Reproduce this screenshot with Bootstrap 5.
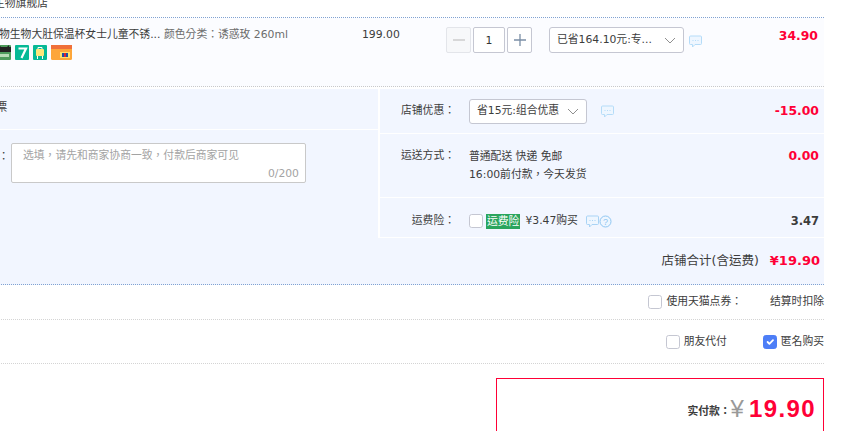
<!DOCTYPE html>
<html>
<head>
  <meta charset="UTF-8" />
  <title>确认订单</title>
  <link href="https://cdn.jsdelivr.net/npm/bootstrap@5.3.0/dist/css/bootstrap.min.css" rel="stylesheet" />
  <style>
    html, body { height: 431px; overflow: hidden; }
    body { background: #fff; color: #3c3c3c; font: 10.8px/16px "DejaVu Sans", "Noto Sans CJK TC", sans-serif; }
    .order-shell { width: 884px; margin: -7px 0 0 -60px; }
    .shop-line { height: 25px; padding-top: 3px; padding-left: 54px; border-bottom: 1px dotted #80a2d2; }
    .item-row { height: 69px; background: #fbfcff; border-bottom: 1px dotted #c9c9c9; padding-top: 9px; }
    .item-title { width: 224px; padding-left: 60px; white-space: nowrap; overflow: hidden; }
    .item-title-text { margin-left: -1px; }
    .item-tags { margin-top: 2px; margin-left: -3px; }
    .item-sku { width: 198px; color: #6c6c6c; white-space: nowrap; }
    .item-price { width: 84px; }
    .item-qty { width: 103px; }
    .stepper-btn { width: 25px; height: 26px; padding: 0; border: 1px solid #c5c7d2; border-radius: 2px; background: #fff; line-height: 1; }
    .stepper-btn.is-off { background: #f7f8fa; border-color: #e3e5ea; }
    .stepper-val { width: 32px; height: 26px; margin: 0 2px; padding: 0; border: 1px solid #c5c7d2; border-radius: 2px; text-align: center; font-size: 10.8px; color: #333; }
    .pick-box { height: 26px; border: 1px solid #c5c7d2; border-radius: 3px; background: #fff; padding: 0 7px; color: #3c3c3c; white-space: nowrap; }
    .pick-wide { width: 135px; }
    .pick-narrow { width: 118px; height: 25px; }
    .msg-icon { width: 13px; height: 13px; flex: none; }
    .msg-after-pick { margin-left: 5px; margin-top: 8px; }
    .msg-after-coupon { margin-left: 14px; }
    .money-red { color: #ff0036; font-family: "DejaVu Sans", sans-serif; font-weight: 700; font-size: 12.4px; }
    .money-dark { color: #3c3c3c; font-family: "DejaVu Sans", sans-serif; font-weight: 700; font-size: 11.5px; }
    .item-total { margin-right: 6px; margin-top: 1px; }
    .info-wrap { width: 884px; margin-top: 2px; }
    .info-left { width: 438px; margin-right: 2px; background: #f2f6ff; }
    .info-right { width: 444px; }
    .info-cell { background: #f2f6ff; border-bottom: 1px solid #fff; padding-right: 5px; }
    .info-label { width: 75px; text-align: right; margin-right: 14px; flex: none; }
    .invoice-cell { height: 41px; padding-top: 11px; padding-left: 24px; border-bottom: 1px solid #fff; }
    .remark-cell { height: 108px; padding-top: 13px; padding-left: 0; }
    .remark-label { width: 69px; text-align: right; color: #3c3c3c; margin-right: 2px; padding-top: 6px; white-space: nowrap; flex: none; }
    .remark-box { width: 295px; height: 40px; border: 1px solid #c9c9c9; border-radius: 2px; background: #fff; padding: 4px 11px 0; color: #a3a3a3; }
    .remark-count { margin-top: 2px; margin-right: -5px; }
    .coupon-cell { height: 45px; }
    .ship-cell { height: 64px; padding-top: 14px; align-items: flex-start; }
    .ship-text { line-height: 18px; }
    .insure-cell { height: 40px; padding-top: 7px; }
    .insure-tag { background: #2aa55e; color: #fff; padding: 0 1px; line-height: 15px; margin: 0 5px 0 3px; }
    .insure-icons { margin-left: 8px; }
    .box-check { width: 14px; height: 14px; margin: 0; border-color: #c5c7d2; border-radius: 2px; flex: none; }
    .box-check:checked { background-color: #4d7ef7; border-color: #4d7ef7; }
    .sum-row { width: 884px; height: 47px; background: #f2f6ff; border-bottom: 1px dotted #80a2d2; padding-right: 4px; }
    .sum-label { font-size: 12.5px; margin-right: 11px; }
    .sum-value { font-size: 13px; }
    .opt-row { border-bottom: 1px dotted #d4d4d4; }
    .opt-one { height: 35px; }
    .opt-two { height: 44px; }
    .opt-gap { margin-left: 36px; }
    .pay-box { width: 328px; height: 70px; margin-top: 14px; margin-left: 556px; border: 1px solid #ff0036; padding: 15px 7px 0 0; }
    .pay-label { font-weight: 700; color: #3c3c3c; margin-top: 10px; }
    .pay-yen { font: 24px/30px "Liberation Sans", sans-serif; color: #999; margin-right: 5px; }
    .pay-num { font: 700 24px/30px "Liberation Sans", sans-serif; color: #ff0036; letter-spacing: 1.4px; }
  </style>
</head>
<body>
  <div class="order-shell">
    <div class="shop-line">生物旗舰店</div>

    <div class="item-row d-flex">
      <div class="item-title">
        <div class="item-title-text">物生物大肚保温杯女士儿童不锈...</div>
        <div class="item-tags d-flex gap-1">
          <svg width="14" height="15" viewBox="0 0 14 15"><rect width="14" height="15" rx="1" fill="#4d9c5c"/><rect y="2" width="14" height="5" fill="#222"/><path d="M2 2V0l2 2M12 2V0l-2 2" fill="#222"/><rect x="3" y="9" width="9" height="3" fill="#b6dcb6"/></svg>
          <svg width="14" height="15" viewBox="0 0 14 15"><rect width="14" height="15" rx="1" fill="#06b996"/><path d="M3.500 3.500h7.500L6.500 13" fill="none" stroke="#fff" stroke-width="2.200"/></svg>
          <svg width="14" height="15" viewBox="0 0 14 15"><rect width="14" height="15" rx="1" fill="#06b996"/><rect x="3" y="4" width="8" height="7" rx="1" fill="#ffe77a"/><path d="M5 4V2.500h4V4M4.500 11v3M9.500 11v3" stroke="#fff" fill="none"/></svg>
          <svg width="21" height="15" viewBox="0 0 21 15"><rect width="21" height="15" rx="1.500" fill="#fda63a"/><rect width="21" height="4" fill="#f0703a"/><rect x="9" y="7" width="10" height="6" fill="#ffe06a"/><rect x="11" y="8" width="6" height="4" fill="#1c4fa5"/><rect x="13" y="8" width="2" height="4" fill="#d23"/></svg>
        </div>
      </div>
      <div class="item-sku">颜色分类：诱惑玫 260ml</div>
      <div class="item-price">199.00</div>
      <div class="item-qty d-flex align-items-start">
        <button class="stepper-btn is-off" type="button" aria-label="减少"><svg width="12" height="12" viewBox="0 0 12 12"><path d="M0 6h12" stroke="#ccc" stroke-width="1.500"/></svg></button><input class="stepper-val" type="text" value="1" /><button class="stepper-btn" type="button" aria-label="增加"><svg width="12" height="12" viewBox="0 0 12 12"><path d="M0 6h12M6 0v12" stroke="#7b8fa6" stroke-width="1.300"/></svg></button>
      </div>
      <div class="d-flex align-items-start">
        <div class="pick-box pick-wide d-flex align-items-center justify-content-between">
          <span>已省164.10元:专...</span>
          <svg width="12" height="7" viewBox="0 0 12 7"><path d="M1 1l5 5 5-5" fill="none" stroke="#8f8f8f"/></svg>
        </div>
        <svg class="msg-icon msg-after-pick" viewBox="0 0 13 13"><path d="M1.500 1h10a1 1 0 0 1 1 1v6.500a1 1 0 0 1-1 1H6L3.500 12V9.500h-2a1 1 0 0 1-1-1V2a1 1 0 0 1 1-1z" fill="#eef6ff" stroke="#b5dcf8"/><path d="M3.500 5.500h6" stroke="#b5dcf8" stroke-dasharray="1 1.500"/></svg>
      </div>
      <div class="money-red item-total ms-auto text-end">34.90</div>
    </div>

    <div class="info-wrap d-flex">
      <div class="info-left">
        <div class="invoice-cell">开具发票</div>
        <div class="remark-cell d-flex">
          <div class="remark-label">给商家留言：</div>
          <div class="remark-box">
            <div>选填，请先和商家协商一致，付款后商家可见</div>
            <div class="remark-count text-end">0/200</div>
          </div>
        </div>
      </div>
      <div class="info-right">
        <div class="info-cell coupon-cell d-flex align-items-center">
          <span class="info-label">店铺优惠：</span>
          <div class="pick-box pick-narrow d-flex align-items-center justify-content-between">
            <span>省15元:组合优惠</span>
            <svg width="12" height="7" viewBox="0 0 12 7"><path d="M1 1l5 5 5-5" fill="none" stroke="#8f8f8f"/></svg>
          </div>
          <svg class="msg-icon msg-after-coupon" viewBox="0 0 13 13"><path d="M1.500 1h10a1 1 0 0 1 1 1v6.500a1 1 0 0 1-1 1H6L3.500 12V9.500h-2a1 1 0 0 1-1-1V2a1 1 0 0 1 1-1z" fill="#eef6ff" stroke="#b5dcf8"/><path d="M3.500 5.500h6" stroke="#b5dcf8" stroke-dasharray="1 1.500"/></svg>
          <span class="money-red ms-auto">-15.00</span>
        </div>
        <div class="info-cell ship-cell d-flex">
          <span class="info-label">运送方式：</span>
          <div class="ship-text">
            <div>普通配送 快递 免邮</div>
            <div>16:00前付款，今天发货</div>
          </div>
          <span class="money-red ms-auto">0.00</span>
        </div>
        <div class="info-cell insure-cell d-flex align-items-center">
          <span class="info-label">运费险：</span>
          <input class="form-check-input box-check" type="checkbox" />
          <span class="insure-tag">运费险</span>
          <span>¥3.47购买</span>
          <svg class="msg-icon insure-icons" viewBox="0 0 13 13"><path d="M1.500 1h10a1 1 0 0 1 1 1v6.500a1 1 0 0 1-1 1H6L3.500 12V9.500h-2a1 1 0 0 1-1-1V2a1 1 0 0 1 1-1z" fill="#eef6ff" stroke="#a9d3f5"/><path d="M3.500 5.500h6" stroke="#a9d3f5" stroke-dasharray="1 1.500"/></svg>
          <svg class="msg-icon" viewBox="0 0 13 13"><circle cx="6.500" cy="6.500" r="5.500" fill="#eef6ff" stroke="#8fc6f2"/><text x="6.500" y="9.800" text-anchor="middle" font-size="9" fill="#8fc6f2" font-family="Liberation Sans">?</text></svg>
          <span class="money-dark ms-auto">3.47</span>
        </div>
      </div>
    </div>

    <div class="sum-row d-flex align-items-center justify-content-end">
      <span class="sum-label">店铺合计(含运费)</span>
      <span class="money-red sum-value">¥19.90</span>
    </div>

    <div class="opt-row opt-one d-flex align-items-center justify-content-end">
      <input class="form-check-input box-check me-1" type="checkbox" />
      <span>使用天猫点券：</span>
      <span class="ms-4 ps-1">结算时扣除</span>
    </div>
    <div class="opt-row opt-two d-flex align-items-center justify-content-end">
      <input class="form-check-input box-check me-1" type="checkbox" />
      <span>朋友代付</span>
      <input class="form-check-input box-check opt-gap me-1" type="checkbox" checked />
      <span>匿名购买</span>
    </div>

    <div class="pay-box d-flex align-items-start justify-content-end">
      <span class="pay-label">实付款：</span>
      <span class="pay-yen">¥</span>
      <span class="pay-num">19.90</span>
    </div>
  </div>
</body>
</html>
